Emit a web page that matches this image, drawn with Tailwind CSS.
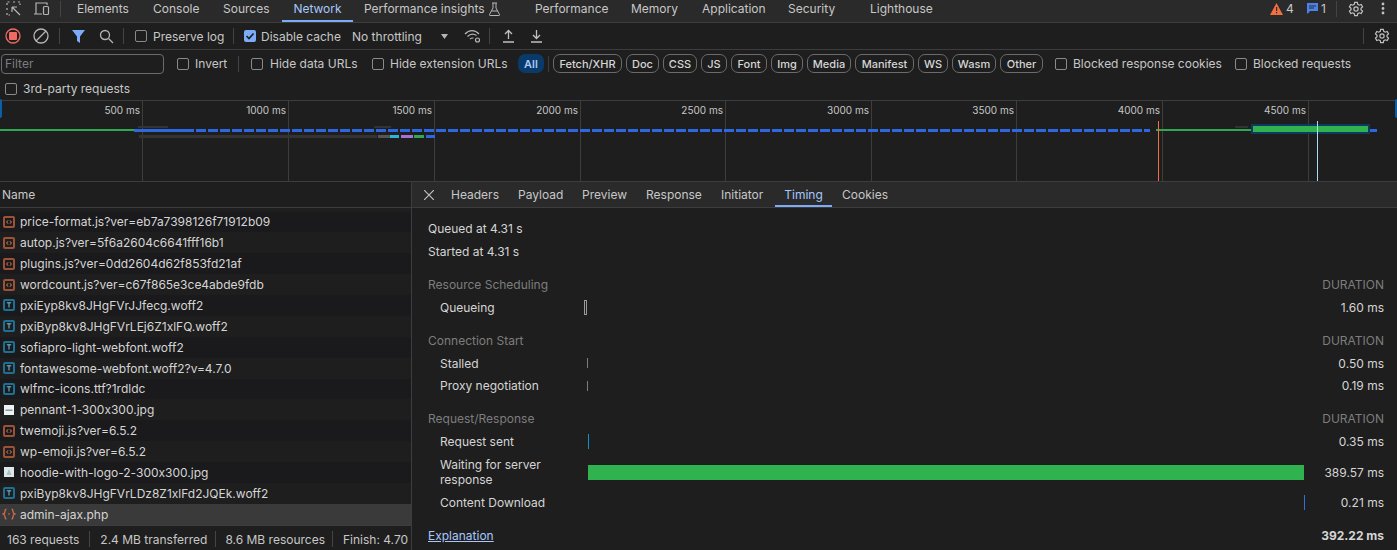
<!doctype html>
<html><head><meta charset="utf-8"><script src="https://cdn.jsdelivr.net/npm/@tailwindcss/browser@4"></script></head>
<body class="m-0 bg-[#1e1e1e]">
<div class="w-[1397px] h-[550px] overflow-hidden flex flex-col bg-[#1e1e1e] text-[#c7c7c7] text-[12px] leading-[15px] font-['Inter','Liberation_Sans',sans-serif] [font-feature-settings:'calt'_0]">

<!-- main tabs -->
<div class="h-[23px] shrink-0 flex items-center pb-[5px] bg-[#2a2a2a] border-b border-[#3d3d3d]">
  <svg class="ml-[6px] w-[15px] h-[15px]" viewBox="0 0 15 15" fill="none" stroke="#b5b5b5" stroke-width="1.2"><path d="M1 4V1h3M7 1h2M12 1h2v3M1 7v2M1 12v2h3" stroke-dasharray="2 1.5"/><path d="M6 6l8 8M6 6v5M6 6h5"/></svg>
  <svg class="ml-[12px] w-[17px] h-[15px]" viewBox="0 0 17 15" fill="none" stroke="#b5b5b5" stroke-width="1.2"><path d="M3 13V2h11v2M1 13h8"/><rect x="10.5" y="5.5" width="5" height="8" rx="1"/></svg>
  <div class="ml-[10px] w-px h-[16px] bg-[#444]"></div>
  <div class="ml-[16px] w-[76px]">Elements</div>
  <div class="w-[70px]">Console</div>
  <div class="w-[59px]">Sources</div>
  <div class="relative w-[71px] h-[17px] flex items-center justify-center text-[#a8c7fa]">Network<div class="absolute left-0 right-0 bottom-[-5px] h-[2px] bg-[#7cacf8]"></div></div>
  <div class="ml-[11px] w-[110px] whitespace-nowrap">Performance insights</div>
  <svg class="ml-[14px] w-[13px] h-[14px]" viewBox="0 0 13 14" fill="none" stroke="#b5b5b5" stroke-width="1"><path d="M4 1h5M5 1v5L1.5 12.5a.7.7 0 0 0 .6 1h8.800a.7.7 0 0 0 .6-1L8 6V1M3.500 9h6"/></svg>
  <div class="ml-[34px] w-[96px]">Performance</div>
  <div class="w-[71px]">Memory</div>
  <div class="w-[86px]">Application</div>
  <div class="w-[82px]">Security</div>
  <div class="w-[80px]">Lighthouse</div>
  <div class="ml-auto flex items-center">
    <svg class="w-[13px] h-[12px]" viewBox="0 0 13 12"><path d="M6.500 0L13 12H0z" fill="#f2703f"/><rect x="6" y="4" width="1.200" height="4" fill="#2a2a2a"/><rect x="6" y="9" width="1.200" height="1.300" fill="#2a2a2a"/></svg>
    <span class="ml-[3px] w-[20px]">4</span>
    <svg class="ml-[1px] w-[11px] h-[11px]" viewBox="0 0 11 11"><path d="M0 0h11v8H3L1 10.500H0z" fill="#4c82e8"/><path d="M2 3h7M2 5h5" stroke="#2a2a2a"/></svg>
    <span class="ml-[3px] w-[12px]">1</span>
    <div class="ml-[3px] w-px h-[16px] bg-[#444]"></div>
    <svg class="ml-[11px] w-[16px] h-[16px]" viewBox="0 0 24 24" fill="none" stroke="#c0c0c0" stroke-width="1.800"><path d="M10 2h4l.6 3 2.300 1.300 2.900-1 2 3.500-2.300 2v2.400l2.300 2-2 3.500-2.900-1-2.300 1.300-.6 3h-4l-.6-3-2.300-1.300-2.900 1-2-3.500 2.300-2v-2.400l-2.300-2 2-3.500 2.900 1L9.400 5z"/><circle cx="12" cy="12" r="3.200"/></svg>
    <svg class="ml-[17px] mr-[12px] w-[4px] h-[13px]" viewBox="0 0 4 13" fill="#c0c0c0"><circle cx="2" cy="2" r="1.400"/><circle cx="2" cy="6.500" r="1.400"/><circle cx="2" cy="11" r="1.400"/></svg>
  </div>
</div>

<!-- toolbar -->
<div class="h-[27px] shrink-0 flex items-center border-b border-[#3d3d3d]">
  <svg class="ml-[5px] w-[16px] h-[16px]" viewBox="0 0 16 16"><circle cx="8" cy="8" r="7" fill="none" stroke="#ee6a62" stroke-width="1.300"/><rect x="4" y="4" width="8" height="8" rx="1" fill="#ee6a62"/></svg>
  <svg class="ml-[12px] w-[16px] h-[16px]" viewBox="0 0 16 16" fill="none" stroke="#b5b5b5" stroke-width="1.300"><circle cx="8" cy="8" r="7"/><path d="M3 13L13 3"/></svg>
  <div class="ml-[10px] w-px h-[16px] bg-[#444]"></div>
  <svg class="ml-[12px] w-[13px] h-[14px]" viewBox="0 0 13 14"><path d="M0 1h13L8 7.500V14L5 12V7.500z" fill="#7cacf8"/></svg>
  <svg class="ml-[14px] w-[15px] h-[15px]" viewBox="0 0 15 15" fill="none" stroke="#b5b5b5" stroke-width="1.300"><circle cx="6" cy="6" r="4.500"/><path d="M9.500 9.500L14 14"/></svg>
  <div class="ml-[9px] w-px h-[16px] bg-[#444]"></div>
  <div class="ml-[11px] w-[12px] h-[12px] rounded-[2px] border border-[#8a8a8a]"></div>
  <div class="ml-[6px] w-[80px] whitespace-nowrap">Preserve log</div>
  <div class="w-px h-[16px] bg-[#444]"></div>
  <div class="ml-[10px] w-[12px] h-[12px] rounded-[2px] bg-[#7cacf8] flex items-center justify-center"><svg class="w-[10px] h-[10px]" viewBox="0 0 10 10" fill="none" stroke="#1e1e1e" stroke-width="1.600"><path d="M1.500 5l2.500 2.500 4.500-5"/></svg></div>
  <div class="ml-[5px] w-[80px] whitespace-nowrap">Disable cache</div>
  <div class="ml-[11px] w-[89px] whitespace-nowrap">No throttling</div>
  <svg class="w-[7px] h-[5px]" viewBox="0 0 7 5"><path d="M0 0h7L3.500 5z" fill="#b5b5b5"/></svg>
  <svg class="ml-[16px] w-[17px] h-[14px]" viewBox="0 0 17 14" fill="none" stroke="#b5b5b5" stroke-width="1.200"><path d="M1 5c4-4.500 10-4.500 14 0M3.500 7.500c3-3 6-3 9-1M6 10c1.200-1 2.500-1.200 3.500-.8"/><circle cx="13.500" cy="11" r="2"/></svg>
  <div class="ml-[8px] w-px h-[16px] bg-[#444]"></div>
  <svg class="ml-[12px] w-[13px] h-[14px]" viewBox="0 0 13 14" fill="none" stroke="#c0c0c0" stroke-width="1.300"><path d="M6.500 10V1.500M3 5l3.500-3.500L10 5M1 13h11"/></svg>
  <svg class="ml-[15px] w-[13px] h-[14px]" viewBox="0 0 13 14" fill="none" stroke="#c0c0c0" stroke-width="1.300"><path d="M6.500 1v8.500M3 6l3.500 3.500L10 6M1 13h11"/></svg>
  <div class="ml-auto w-px h-[16px] bg-[#444]"></div>
  <svg class="ml-[10px] mr-[7px] w-[16px] h-[16px]" viewBox="0 0 24 24" fill="none" stroke="#c0c0c0" stroke-width="1.800"><path d="M10 2h4l.6 3 2.300 1.300 2.900-1 2 3.500-2.300 2v2.400l2.300 2-2 3.500-2.900-1-2.300 1.300-.6 3h-4l-.6-3-2.300-1.300-2.900 1-2-3.500 2.300-2v-2.400l-2.300-2 2-3.500 2.900 1L9.400 5z"/><circle cx="12" cy="12" r="3.200"/></svg>
</div>

<!-- filter row -->
<div class="h-[27px] shrink-0 flex items-center">
  <div class="ml-[1px] w-[163px] h-[20px] rounded-[4px] border border-[#6b6b6b] pl-[3px] flex items-center text-[#7d7d7d]">Filter</div>
  <div class="ml-[13px] w-[12px] h-[12px] rounded-[2px] border border-[#8a8a8a]"></div>
  <div class="ml-[6px] w-[43px]">Invert</div>
  <div class="w-px h-[16px] bg-[#444]"></div>
  <div class="ml-[12px] w-[12px] h-[12px] rounded-[2px] border border-[#8a8a8a]"></div>
  <div class="ml-[7px] w-[102px] whitespace-nowrap">Hide data URLs</div>
  <div class="w-[12px] h-[12px] rounded-[2px] border border-[#8a8a8a]"></div>
  <div class="ml-[6px] w-[128px] whitespace-nowrap">Hide extension URLs</div>
  <div class="h-[19px] w-[26px] pt-[1px] rounded-[7px] bg-[#0a3a69] text-[#a8c7fa] font-semibold text-[11px] flex items-center justify-center">All</div>
  <div class="ml-[4px] w-px h-[16px] bg-[#3d3d3d]"></div>
  <div class="ml-[4px] flex items-center gap-[4px] text-[11px] font-medium text-[#d5d5d5]">
    <div class="h-[19px] w-[69px] pt-[1px] rounded-[7px] border border-[#6b6b6b] flex items-center justify-center">Fetch/XHR</div>
    <div class="h-[19px] w-[33px] pt-[1px] rounded-[7px] border border-[#6b6b6b] flex items-center justify-center">Doc</div>
    <div class="h-[19px] w-[34px] pt-[1px] rounded-[7px] border border-[#6b6b6b] flex items-center justify-center">CSS</div>
    <div class="h-[19px] w-[26px] pt-[1px] rounded-[7px] border border-[#6b6b6b] flex items-center justify-center">JS</div>
    <div class="h-[19px] w-[36px] pt-[1px] rounded-[7px] border border-[#6b6b6b] flex items-center justify-center">Font</div>
    <div class="h-[19px] w-[32px] pt-[1px] rounded-[7px] border border-[#6b6b6b] flex items-center justify-center">Img</div>
    <div class="h-[19px] w-[44px] pt-[1px] rounded-[7px] border border-[#6b6b6b] flex items-center justify-center">Media</div>
    <div class="h-[19px] w-[59px] pt-[1px] rounded-[7px] border border-[#6b6b6b] flex items-center justify-center">Manifest</div>
    <div class="h-[19px] w-[30px] pt-[1px] rounded-[7px] border border-[#6b6b6b] flex items-center justify-center">WS</div>
    <div class="h-[19px] w-[44px] pt-[1px] rounded-[7px] border border-[#6b6b6b] flex items-center justify-center">Wasm</div>
    <div class="h-[19px] w-[43px] pt-[1px] rounded-[7px] border border-[#6b6b6b] flex items-center justify-center">Other</div>
  </div>
  <div class="ml-[12px] w-[12px] h-[12px] rounded-[2px] border border-[#8a8a8a]"></div>
  <div class="ml-[6px] w-[150px] whitespace-nowrap">Blocked response cookies</div>
  <div class="ml-[12px] w-[12px] h-[12px] rounded-[2px] border border-[#8a8a8a]"></div>
  <div class="ml-[6px] whitespace-nowrap">Blocked requests</div>
</div>

<!-- third party row -->
<div class="h-[24px] shrink-0 flex items-center border-b border-[#3d3d3d]">
  <div class="ml-[5px] w-[12px] h-[12px] rounded-[2px] border border-[#8a8a8a]"></div>
  <div class="ml-[6px]">3rd-party requests</div>
</div>

<!-- overview -->
<div class="relative h-[81px] shrink-0 flex bg-[#1e1e1e] border-b border-[#3d3d3d] text-[10px]">
  <div class="w-[143px] shrink-0 border-r border-[#3d3d3d] text-right pr-[2px] pt-[2px]">500 ms</div>
  <div class="w-[146px] shrink-0 border-r border-[#3d3d3d] text-right pr-[2px] pt-[2px]">1000 ms</div>
  <div class="w-[146px] shrink-0 border-r border-[#3d3d3d] text-right pr-[2px] pt-[2px]">1500 ms</div>
  <div class="w-[146px] shrink-0 border-r border-[#3d3d3d] text-right pr-[2px] pt-[2px]">2000 ms</div>
  <div class="w-[145px] shrink-0 border-r border-[#3d3d3d] text-right pr-[2px] pt-[2px]">2500 ms</div>
  <div class="w-[146px] shrink-0 border-r border-[#3d3d3d] text-right pr-[2px] pt-[2px]">3000 ms</div>
  <div class="w-[145px] shrink-0 border-r border-[#3d3d3d] text-right pr-[2px] pt-[2px]">3500 ms</div>
  <div class="w-[146px] shrink-0 border-r border-[#3d3d3d] text-right pr-[2px] pt-[2px]">4000 ms</div>
  <div class="w-[146px] shrink-0 border-r border-[#3d3d3d] text-right pr-[2px] pt-[2px]">4500 ms</div>
  <div class="absolute left-0 top-[-2px] w-[2px] h-[19px] rounded-r-[2px] bg-[#0b5ea8]"></div>
  <div class="absolute right-0 top-[-2px] w-[2px] h-[19px] rounded-l-[2px] bg-[#0b5ea8]"></div>
  <div class="absolute left-0 top-[28px] w-[134px] h-[2px] bg-[#2fa84f]"></div>
  <div class="absolute left-[134px] top-[28px] w-[50px] h-[3px] bg-[#2e68e0]"></div>
  <div class="absolute left-[184px] top-[28px] w-[966px] h-[3px] bg-[repeating-linear-gradient(90deg,#2e68e0_0_10px,transparent_10px_12px)]"></div>
  <div class="absolute left-[138px] top-[25px] w-[30px] h-[2px] bg-[#333]"></div>
  <div class="absolute left-[374px] top-[25px] w-[17px] h-[2px] bg-[#333]"></div>
  <div class="absolute left-[139px] top-[34px] w-[238px] h-[3px] bg-[#333]"></div>
  <div class="absolute left-[378px] top-[34px] w-[12px] h-[3px] bg-[#555]"></div>
  <div class="absolute left-[390px] top-[34px] w-[9px] h-[3px] bg-[#2cb5d6]"></div>
  <div class="absolute left-[401px] top-[34px] w-[12px] h-[3px] bg-[#a86fd8]"></div>
  <div class="absolute left-[414px] top-[34px] w-[10px] h-[3px] bg-[#2fa84f]"></div>
  <div class="absolute left-[426px] top-[34px] w-[9px] h-[3px] bg-[#2e68e0]"></div>
  <div class="absolute left-[1156px] top-[28px] w-[96px] h-[2px] bg-[#2fa84f]"></div>
  <div class="absolute left-[1235px] top-[25px] w-[13px] h-[2px] bg-[#333]"></div>
  <div class="absolute left-[1251px] top-[23px] w-[119px] h-[10px] bg-[#0d3a5e]"></div>
  <div class="absolute left-[1253px] top-[25px] w-[115px] h-[6px] bg-[#30b24f]"></div>
  <div class="absolute left-[1370px] top-[28px] w-[7px] h-[3px] bg-[#2e68e0]"></div>
  <div class="absolute left-[1158px] top-[20px] w-px h-[60px] bg-[#f2703f]"></div>
  <div class="absolute left-[1317px] top-[20px] w-px h-[60px] bg-[#a9dcf5]"></div>
</div>

<!-- main split -->
<div class="flex-1 flex min-h-0">
  <!-- request list -->
  <div class="w-[412px] shrink-0 flex flex-col border-r border-[#3d3d3d]">
    <div class="h-[26px] shrink-0 flex items-center pl-[2px] border-b border-[#3d3d3d] bg-[#1e1e1e]">Name</div>
    <div class="flex-1 pt-[3.5px] text-[#d5d5d5] bg-[#1e1e1e]">
      <div class="h-[20.88px] flex items-center bg-[#1a1a1c]"><svg class="ml-[3px] w-[12px] h-[12px]" viewBox="0 0 12 12" fill="none" stroke="#9c5236"><rect x="1" y="1" width="10" height="10" rx="1" stroke-width="2"/><path d="M5 4.300L3.600 6 5 7.700M7 4.300L8.400 6 7 7.700" stroke="#e0805c"/></svg><span class="ml-[5px]">price-format.js?ver=eb7a7398126f71912b09</span></div>
      <div class="h-[20.88px] flex items-center"><svg class="ml-[3px] w-[12px] h-[12px]" viewBox="0 0 12 12" fill="none" stroke="#9c5236"><rect x="1" y="1" width="10" height="10" rx="1" stroke-width="2"/><path d="M5 4.300L3.600 6 5 7.700M7 4.300L8.400 6 7 7.700" stroke="#e0805c"/></svg><span class="ml-[5px]">autop.js?ver=5f6a2604c6641fff16b1</span></div>
      <div class="h-[20.88px] flex items-center bg-[#1a1a1c]"><svg class="ml-[3px] w-[12px] h-[12px]" viewBox="0 0 12 12" fill="none" stroke="#9c5236"><rect x="1" y="1" width="10" height="10" rx="1" stroke-width="2"/><path d="M5 4.300L3.600 6 5 7.700M7 4.300L8.400 6 7 7.700" stroke="#e0805c"/></svg><span class="ml-[5px]">plugins.js?ver=0dd2604d62f853fd21af</span></div>
      <div class="h-[20.88px] flex items-center"><svg class="ml-[3px] w-[12px] h-[12px]" viewBox="0 0 12 12" fill="none" stroke="#9c5236"><rect x="1" y="1" width="10" height="10" rx="1" stroke-width="2"/><path d="M5 4.300L3.600 6 5 7.700M7 4.300L8.400 6 7 7.700" stroke="#e0805c"/></svg><span class="ml-[5px]">wordcount.js?ver=c67f865e3ce4abde9fdb</span></div>
      <div class="h-[20.88px] flex items-center bg-[#1a1a1c]"><svg class="ml-[3px] w-[12px] h-[12px]" viewBox="0 0 12 12" fill="none" stroke="#1d6f94"><rect x="1" y="1" width="10" height="10" rx="1" stroke-width="2"/><path d="M3.800 3.800h4.400M6 3.800V8.500" stroke="#6ec1e4"/></svg><span class="ml-[5px]">pxiEyp8kv8JHgFVrJJfecg.woff2</span></div>
      <div class="h-[20.88px] flex items-center"><svg class="ml-[3px] w-[12px] h-[12px]" viewBox="0 0 12 12" fill="none" stroke="#1d6f94"><rect x="1" y="1" width="10" height="10" rx="1" stroke-width="2"/><path d="M3.800 3.800h4.400M6 3.800V8.500" stroke="#6ec1e4"/></svg><span class="ml-[5px]">pxiByp8kv8JHgFVrLEj6Z1xlFQ.woff2</span></div>
      <div class="h-[20.88px] flex items-center bg-[#1a1a1c]"><svg class="ml-[3px] w-[12px] h-[12px]" viewBox="0 0 12 12" fill="none" stroke="#1d6f94"><rect x="1" y="1" width="10" height="10" rx="1" stroke-width="2"/><path d="M3.800 3.800h4.400M6 3.800V8.500" stroke="#6ec1e4"/></svg><span class="ml-[5px]">sofiapro-light-webfont.woff2</span></div>
      <div class="h-[20.88px] flex items-center"><svg class="ml-[3px] w-[12px] h-[12px]" viewBox="0 0 12 12" fill="none" stroke="#1d6f94"><rect x="1" y="1" width="10" height="10" rx="1" stroke-width="2"/><path d="M3.800 3.800h4.400M6 3.800V8.500" stroke="#6ec1e4"/></svg><span class="ml-[5px]">fontawesome-webfont.woff2?v=4.7.0</span></div>
      <div class="h-[20.88px] flex items-center bg-[#1a1a1c]"><svg class="ml-[3px] w-[12px] h-[12px]" viewBox="0 0 12 12" fill="none" stroke="#1d6f94"><rect x="1" y="1" width="10" height="10" rx="1" stroke-width="2"/><path d="M3.800 3.800h4.400M6 3.800V8.500" stroke="#6ec1e4"/></svg><span class="ml-[5px]">wlfmc-icons.ttf?1rdldc</span></div>
      <div class="h-[20.88px] flex items-center"><svg class="ml-[4px] w-[10px] h-[10px]" viewBox="0 0 10 10"><rect width="10" height="10" fill="#eef2f4"/><rect x="1.500" y="4.500" width="7" height="1.500" fill="#7f9aa5"/></svg><span class="ml-[6px]">pennant-1-300x300.jpg</span></div>
      <div class="h-[20.88px] flex items-center bg-[#1a1a1c]"><svg class="ml-[3px] w-[12px] h-[12px]" viewBox="0 0 12 12" fill="none" stroke="#9c5236"><rect x="1" y="1" width="10" height="10" rx="1" stroke-width="2"/><path d="M5 4.300L3.600 6 5 7.700M7 4.300L8.400 6 7 7.700" stroke="#e0805c"/></svg><span class="ml-[5px]">twemoji.js?ver=6.5.2</span></div>
      <div class="h-[20.88px] flex items-center"><svg class="ml-[3px] w-[12px] h-[12px]" viewBox="0 0 12 12" fill="none" stroke="#9c5236"><rect x="1" y="1" width="10" height="10" rx="1" stroke-width="2"/><path d="M5 4.300L3.600 6 5 7.700M7 4.300L8.400 6 7 7.700" stroke="#e0805c"/></svg><span class="ml-[5px]">wp-emoji.js?ver=6.5.2</span></div>
      <div class="h-[20.88px] flex items-center bg-[#1a1a1c]"><svg class="ml-[4px] w-[10px] h-[10px]" viewBox="0 0 10 10"><rect width="10" height="10" fill="#dfe7ea"/><path d="M5 2l2.500 6h-5z" fill="#a9bfc5"/></svg><span class="ml-[6px]">hoodie-with-logo-2-300x300.jpg</span></div>
      <div class="h-[20.88px] flex items-center"><svg class="ml-[3px] w-[12px] h-[12px]" viewBox="0 0 12 12" fill="none" stroke="#1d6f94"><rect x="1" y="1" width="10" height="10" rx="1" stroke-width="2"/><path d="M3.800 3.800h4.400M6 3.800V8.500" stroke="#6ec1e4"/></svg><span class="ml-[5px]">pxiByp8kv8JHgFVrLDz8Z1xlFd2JQEk.woff2</span></div>
      <div class="h-[20.88px] flex items-center bg-[#3a3a3a]"><svg class="ml-[2px] w-[14px] h-[12px]" viewBox="0 0 14 12" fill="none" stroke="#e0704c" stroke-width="1.200"><path d="M4.500 1C3 1 3 2 3 3.500S2.500 5.500 1 6c1.500.5 2 1 2 2.500S3 11 4.500 11M9.500 1C11 1 11 2 11 3.500s.5 2 2 2.500c-1.500.5-2 1-2 2.500S11 11 9.500 11"/><circle cx="7" cy="6" r=".8" fill="#e0704c" stroke="none"/></svg><span class="ml-[4px]">admin-ajax.php</span></div>
    </div>
    <div class="h-[25px] shrink-0 flex items-center border-t border-[#3d3d3d] pl-[7px] pt-[2px] whitespace-nowrap">
      <span>163 requests</span><div class="ml-[10px] mr-[10px] w-px h-[16px] bg-[#444]"></div><span>2.4 MB transferred</span><div class="ml-[8px] mr-[9px] w-px h-[16px] bg-[#444]"></div><span>8.6 MB resources</span><div class="ml-[7px] mr-[10px] w-px h-[16px] bg-[#444]"></div><span>Finish: 4.70</span>
    </div>
  </div>

  <!-- detail -->
  <div class="flex-1 min-w-0 flex flex-col">
    <div class="h-[26px] shrink-0 flex items-center bg-[#2a2a2a] border-b border-[#3d3d3d]">
      <svg class="ml-[12px] w-[10px] h-[10px]" viewBox="0 0 10 10" stroke="#c0c0c0" stroke-width="1.200"><path d="M0 0l10 10M10 0L0 10"/></svg>
      <div class="ml-[17px] w-[67px]">Headers</div>
      <div class="w-[64px]">Payload</div>
      <div class="w-[64px]">Preview</div>
      <div class="w-[75px]">Response</div>
      <div class="w-[54px]">Initiator</div>
      <div class="relative w-[57px] h-[25px] flex items-center justify-center text-[#a8c7fa]">Timing<div class="absolute left-0 right-0 bottom-0 h-[2px] bg-[#7cacf8]"></div></div>
      <div class="ml-[10px]">Cookies</div>
    </div>
    <div class="flex-1 pl-[16px] pr-[13px] pt-[9px] text-[#d5d5d5]">
      <div class="h-[23px] flex items-center">Queued at 4.31 s</div>
      <div class="h-[23px] flex items-center">Started at 4.31 s</div>

      <div class="mt-[10px] h-[23px] flex items-center justify-between text-[#7d7d7d]"><span>Resource Scheduling</span><span>DURATION</span></div>
      <div class="h-[23px] flex items-center"><span class="ml-[12px] w-[144px]">Queueing</span><div class="w-[3px] h-[15px] border border-[#9a9a9a]"></div><span class="ml-auto">1.60 ms</span></div>

      <div class="mt-[10px] h-[23px] flex items-center justify-between text-[#7d7d7d]"><span>Connection Start</span><span>DURATION</span></div>
      <div class="h-[22px] flex items-center"><span class="ml-[12px] w-[147px]">Stalled</span><div class="w-px h-[10px] bg-[#7d7d7d]"></div><span class="ml-auto">0.50 ms</span></div>
      <div class="h-[23px] flex items-center"><span class="ml-[12px] w-[147px]">Proxy negotiation</span><div class="w-px h-[10px] bg-[#7d7d7d]"></div><span class="ml-auto">0.19 ms</span></div>

      <div class="mt-[10px] h-[23px] flex items-center justify-between text-[#7d7d7d]"><span>Request/Response</span><span>DURATION</span></div>
      <div class="h-[23px] flex items-center"><span class="ml-[12px] w-[148px]">Request sent</span><div class="w-px h-[15px] bg-[#1a8fc7]"></div><span class="ml-auto">0.35 ms</span></div>
      <div class="h-[38px] flex items-center"><span class="ml-[12px] w-[148px]">Waiting for server response</span><div class="w-[716px] h-[15px] bg-[#30b24f]"></div><span class="ml-auto">389.57 ms</span></div>
      <div class="h-[23px] flex items-center"><span class="ml-[12px] w-[864px]">Content Download</span><div class="w-px h-[15px] bg-[#2f6fe0]"></div><span class="ml-auto">0.21 ms</span></div>

      <div class="mt-[10px] h-[23px] flex items-center justify-between"><span class="text-[#a8c7fa] underline">Explanation</span><span class="font-bold">392.22 ms</span></div>
    </div>
  </div>
</div>
</div>
</body></html>
